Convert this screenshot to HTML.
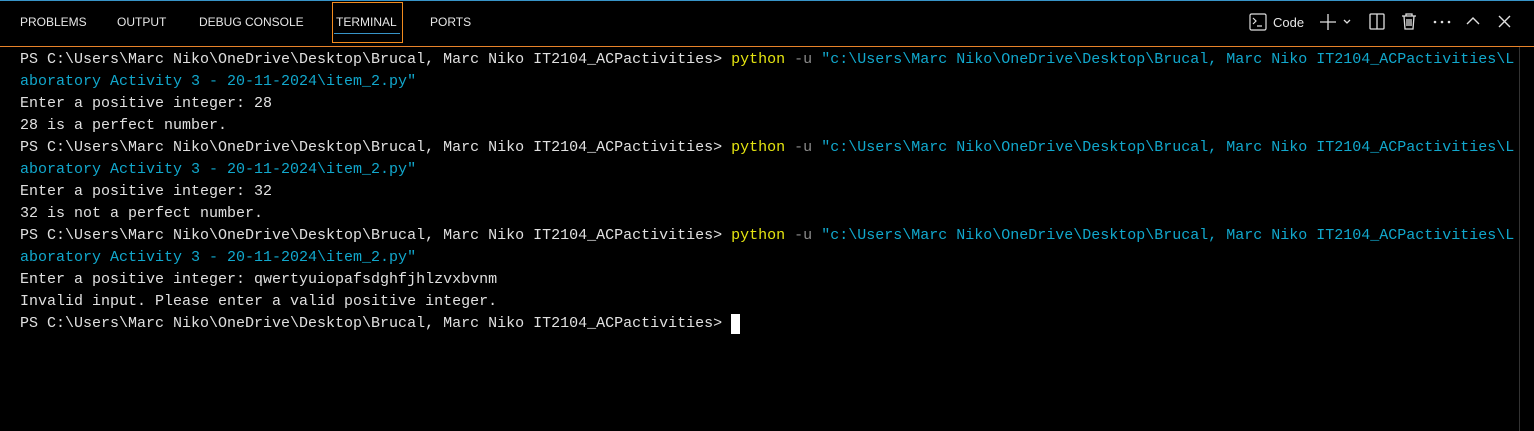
<!DOCTYPE html>
<html><head><style>
body{margin:0;width:1534px;height:431px;background:#000;overflow:hidden;position:relative;font-family:"Liberation Sans",sans-serif}
.topline{position:absolute;left:0;top:0;width:1534px;height:1px;background:#3794c8}
.tab{position:absolute;top:15px;color:#e7e7e7;font-size:12px}
.tb{position:absolute;left:332px;top:2px;width:69px;height:39px;border:1px solid #f28b1e}
.ul{position:absolute;left:334px;top:33px;width:66px;height:1px;background:#3794c8}
.sep{position:absolute;top:46px;left:0;width:1534px;height:1px;background:#e8832a}
.vl{position:absolute;left:1519px;top:47px;width:1px;height:384px;background:#333}
.term{position:absolute;left:20px;top:49px;font-family:"Liberation Mono",monospace;font-size:15px;line-height:22px;color:#e0e0e0;white-space:pre}
.y{color:#e5e510}.g{color:#8a8a8a}.c{color:#11a8cd}
.cur{display:inline-block;width:9px;height:20px;background:#fff;vertical-align:top;margin-top:1px}
.ic{position:absolute;color:#e0e0e0}
</style></head><body>
<div class="topline"></div>
<div class="tab" style="left:20px">PROBLEMS</div>
<div class="tab" style="left:117px">OUTPUT</div>
<div class="tab" style="left:199px">DEBUG CONSOLE</div>
<div class="tab" style="left:336px">TERMINAL</div>
<div class="tab" style="left:430px">PORTS</div>
<div class="tb"></div><div class="ul"></div>
<svg class="ic" style="left:1249px;top:13px" width="18" height="18" viewBox="0 0 18 18" fill="none" stroke="#e0e0e0" stroke-width="1.2"><rect x="1" y="1" width="16" height="16" rx="1.5"/><path d="M4 5l3 3-3 3M8 13h5"/></svg>
<div class="tab" style="left:1273px;top:15px;font-size:13px">Code</div>
<svg class="ic" style="left:1318px;top:12px" width="40" height="20" viewBox="0 0 40 20" fill="none" stroke="#e0e0e0" stroke-width="1.3"><path d="M10 2v16M2 10h16"/><path d="M26 8l3 3 3-3"/></svg>
<svg class="ic" style="left:1369px;top:13px" width="16" height="17" viewBox="0 0 16 17" fill="none" stroke="#e0e0e0" stroke-width="1.3"><rect x="1" y="1" width="14" height="15" rx="1"/><path d="M8 1v15"/></svg>
<svg class="ic" style="left:1401px;top:12px" width="16" height="18" viewBox="0 0 16 18" fill="none" stroke="#e0e0e0" stroke-width="1.3"><path d="M1 4h14M5 4V2h6v2M3 4l1 13h8l1-13M6 7v7M8 7v7M10 7v7"/></svg>
<svg class="ic" style="left:1433px;top:20px" width="18" height="4" viewBox="0 0 18 4" fill="#e0e0e0"><circle cx="2" cy="2" r="1.3"/><circle cx="9" cy="2" r="1.3"/><circle cx="16" cy="2" r="1.3"/></svg>
<svg class="ic" style="left:1466px;top:16px" width="14" height="10" viewBox="0 0 14 10" fill="none" stroke="#e0e0e0" stroke-width="1.4"><path d="M1 8l6-6 6 6"/></svg>
<svg class="ic" style="left:1498px;top:15px" width="13" height="13" viewBox="0 0 13 13" fill="none" stroke="#e0e0e0" stroke-width="1.4"><path d="M1 1l11 11M12 1L1 12"/></svg>
<div class="sep"></div><div class="vl"></div>
<div class="term">PS C:\Users\Marc Niko\OneDrive\Desktop\Brucal, Marc Niko IT2104_ACPactivities&gt; <span class="y">python</span> <span class="g">-u</span> <span class="c">"c:\Users\Marc Niko\OneDrive\Desktop\Brucal, Marc Niko IT2104_ACPactivities\L</span>
<span class="c">aboratory Activity 3 - 20-11-2024\item_2.py"</span>
Enter a positive integer: 28
28 is a perfect number.
PS C:\Users\Marc Niko\OneDrive\Desktop\Brucal, Marc Niko IT2104_ACPactivities&gt; <span class="y">python</span> <span class="g">-u</span> <span class="c">"c:\Users\Marc Niko\OneDrive\Desktop\Brucal, Marc Niko IT2104_ACPactivities\L</span>
<span class="c">aboratory Activity 3 - 20-11-2024\item_2.py"</span>
Enter a positive integer: 32
32 is not a perfect number.
PS C:\Users\Marc Niko\OneDrive\Desktop\Brucal, Marc Niko IT2104_ACPactivities&gt; <span class="y">python</span> <span class="g">-u</span> <span class="c">"c:\Users\Marc Niko\OneDrive\Desktop\Brucal, Marc Niko IT2104_ACPactivities\L</span>
<span class="c">aboratory Activity 3 - 20-11-2024\item_2.py"</span>
Enter a positive integer: qwertyuiopafsdghfjhlzvxbvnm
Invalid input. Please enter a valid positive integer.
PS C:\Users\Marc Niko\OneDrive\Desktop\Brucal, Marc Niko IT2104_ACPactivities&gt; <span class="cur"></span></div>
</body></html>
